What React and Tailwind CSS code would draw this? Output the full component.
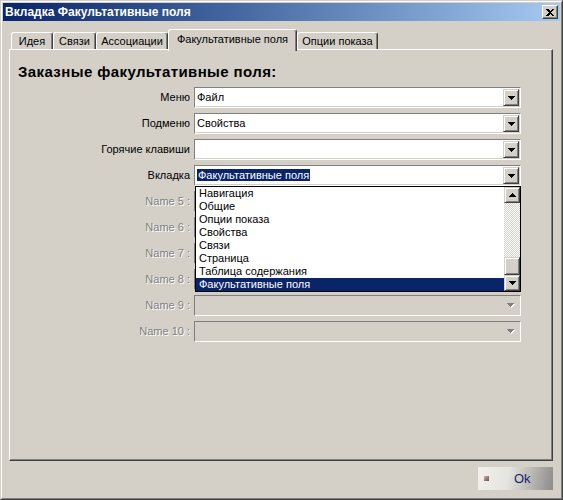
import React from 'react';

function DownArrow({ disabled }) {
  if (disabled) {
    return (
      <svg width="8" height="5" viewBox="0 0 8 5" shapeRendering="crispEdges">
        <path d="M1 1h7v1h-1v1h-1v1h-1v1h-1v-1h-1v-1h-1v-1h-1z" fill="#ffffff" />
        <path d="M0 0h7v1h-1v1h-1v1h-1v1h-1v-1h-1v-1h-1v-1h-1z" fill="#808080" />
      </svg>
    );
  }
  return (
    <svg width="7" height="4" viewBox="0 0 7 4" shapeRendering="crispEdges">
      <path d="M0 0h7v1h-1v1h-1v1h-1v1h-1v-1h-1v-1h-1v-1h-1z" fill="#000" />
    </svg>
  );
}

function UpArrow() {
  return (
    <svg width="7" height="4" viewBox="0 0 7 4" shapeRendering="crispEdges">
      <path d="M3 0h1v1h1v1h1v1h1v1h-7v-1h1v-1h1v-1h1z" fill="#000" />
    </svg>
  );
}

function BevelButton({ className = '', children }) {
  return (
    <div
      className={
        'flex items-center justify-center bg-[#d4d0c8] border border-t-[#d4d0c8] border-l-[#d4d0c8] border-r-[#404040] border-b-[#404040] shadow-[inset_1px_1px_#ffffff,inset_-1px_-1px_#808080] ' +
        className
      }
    >
      {children}
    </div>
  );
}

function Combo({ value, selected, disabled, children }) {
  return (
    <div className="relative h-[21px] border border-t-[#808080] border-l-[#808080] border-r-white border-b-white">
      <div
        className={
          'flex h-full items-center border border-t-transparent border-l-transparent border-r-[#d4d0c8] border-b-[#d4d0c8] ' +
          (disabled ? 'bg-[#d4d0c8]' : 'bg-white')
        }
      >
        <div className="flex-1 pl-px text-[11px] leading-[13px] text-black whitespace-nowrap">
          {selected ? <span className="bg-[#0a246a] px-px text-white">{value}</span> : value}
        </div>
        {disabled ? (
          <div className="flex h-[17px] w-[16px] items-center justify-center">
            <DownArrow disabled />
          </div>
        ) : (
          <BevelButton className="h-[17px] w-[16px]">
            <DownArrow />
          </BevelButton>
        )}
      </div>
      {children}
    </div>
  );
}

const listItems = [
  'Навигация',
  'Общие',
  'Опции показа',
  'Свойства',
  'Связи',
  'Страница',
  'Таблица содержания',
  'Факультативные поля',
];

function DropList() {
  return (
    <div className="absolute left-0 top-[20px] z-20 flex h-[106px] w-[326px] border border-black bg-white">
      <div className="flex-1">
        {listItems.map((item, i) => (
          <div
            key={item}
            className={
              'h-[13px] pl-[3px] text-[11px] leading-[13px] whitespace-nowrap ' +
              (i === listItems.length - 1 ? 'bg-[#0a246a] text-white' : 'text-black')
            }
          >
            {item}
          </div>
        ))}
      </div>
      <div className="flex w-[16px] flex-col">
        <BevelButton className="h-[16px] w-[16px]">
          <UpArrow />
        </BevelButton>
        <div className="flex-1 bg-[image:repeating-conic-gradient(#ffffff_0%_25%,#d4d0c8_0%_50%)] bg-[length:2px_2px]" />
        <BevelButton className="h-[18px] w-[16px]" />
        <BevelButton className="h-[16px] w-[16px]">
          <DownArrow />
        </BevelButton>
      </div>
    </div>
  );
}

function Label({ children, disabled }) {
  return (
    <div
      className={
        'flex h-[21px] items-center justify-end text-[11px] whitespace-nowrap ' +
        (disabled ? 'text-[#808080] [text-shadow:1px_1px_0_#ffffff]' : 'text-black')
      }
    >
      {children}
    </div>
  );
}

function Tab({ label, width, active }) {
  if (active) {
    return (
      <div
        className={
          'relative z-10 -mb-[2px] h-[22px] rounded-t-[3px] border border-b-0 border-t-white border-l-white border-r-[#404040] bg-[#d4d0c8] pt-[3px] text-center text-[11px] leading-[13px] text-black shadow-[inset_-1px_0_#808080] ' +
          width
        }
      >
        {label}
      </div>
    );
  }
  return (
    <div
      className={
        'h-[17px] rounded-t-[3px] border border-b-0 border-t-white border-l-white border-r-[#404040] pt-[2px] text-center text-[11px] leading-[13px] text-black shadow-[inset_-1px_0_#808080] ' +
        width
      }
    >
      {label}
    </div>
  );
}

export default function App() {
  return (
    <div className="h-[500px] w-[563px] border border-t-[#d4d0c8] border-l-[#d4d0c8] border-r-[#404040] border-b-[#404040] bg-[#d4d0c8] font-['Liberation_Sans',Arial,sans-serif]">
      <div className="flex h-full flex-col border border-t-white border-l-white border-r-[#808080] border-b-[#808080] p-px">
        {/* title bar */}
        <div className="flex h-[18px] items-center justify-between bg-linear-to-r from-[#0a246a] to-[#a6caf0] pl-[2px] pr-[2px]">
          <span className="text-[12px] font-bold leading-[14px] text-white">Вкладка Факультативные поля</span>
          <div className="flex h-[14px] w-[16px] items-center justify-center border border-t-white border-l-white border-r-[#404040] border-b-[#404040] bg-[#d4d0c8] shadow-[inset_-1px_-1px_#808080]">
            <svg width="8" height="7" viewBox="0 0 8 7" shapeRendering="crispEdges">
              <path d="M0 0h2l2 2l2-2h2l-3 3.5l3 3.5h-2l-2-2l-2 2h-2l3-3.5z" fill="#000" />
            </svg>
          </div>
        </div>

        {/* tabs */}
        <div className="mt-[8px] flex h-[20px] items-end pl-[8px]">
          <Tab label="Идея" width="w-[42px]" />
          <Tab label="Связи" width="w-[43px]" />
          <Tab label="Ассоциации" width="w-[72px]" />
          <Tab label="Факультативные поля" width="w-[129px]" active />
          <Tab label="Опции показа" width="w-[81px]" />
        </div>

        <div className="ml-[6px] w-[544px]">
          <div className="h-[412px] border border-t-white border-l-white border-r-[#404040] border-b-[#404040] pl-[8px] pt-[13px] shadow-[inset_-1px_-1px_#808080]">
            <div className="mb-[6px] text-[15px] font-bold leading-[18px] tracking-[0.4px] text-black">
              Заказные факультативные поля:
            </div>
            <div className="grid grid-cols-[172px_327px] gap-x-[4px] gap-y-[5px]">
              <Label>Меню</Label>
              <Combo value="Файл" />
              <Label>Подменю</Label>
              <Combo value="Свойства" />
              <Label>Горячие клавиши</Label>
              <Combo value="" />
              <Label>Вкладка</Label>
              <Combo value="Факультативные поля" selected>
                <DropList />
              </Combo>
              <Label disabled>Name 5 :</Label>
              <Combo value="" disabled />
              <Label disabled>Name 6 :</Label>
              <Combo value="" disabled />
              <Label disabled>Name 7 :</Label>
              <Combo value="" disabled />
              <Label disabled>Name 8 :</Label>
              <Combo value="" disabled />
              <Label disabled>Name 9 :</Label>
              <Combo value="" disabled />
              <Label disabled>Name 10 :</Label>
              <Combo value="" disabled />
            </div>
          </div>

          {/* bottom button */}
          <div className="mt-[6px] flex justify-end">
            <button className="flex h-[23px] w-[75px] items-center bg-[linear-gradient(100deg,#f2f0ec_0%,#e6e4df_40%,#8e8c88_100%)] pl-[6px]">
              <span className="h-[5px] w-[5px] bg-linear-to-br from-[#d2b0b0] to-[#6a4c4c]" />
              <span className="ml-[25px] text-[13px] leading-[15px] text-[#1c1c6e]">Ok</span>
            </button>
          </div>
        </div>
      </div>
    </div>
  );
}
